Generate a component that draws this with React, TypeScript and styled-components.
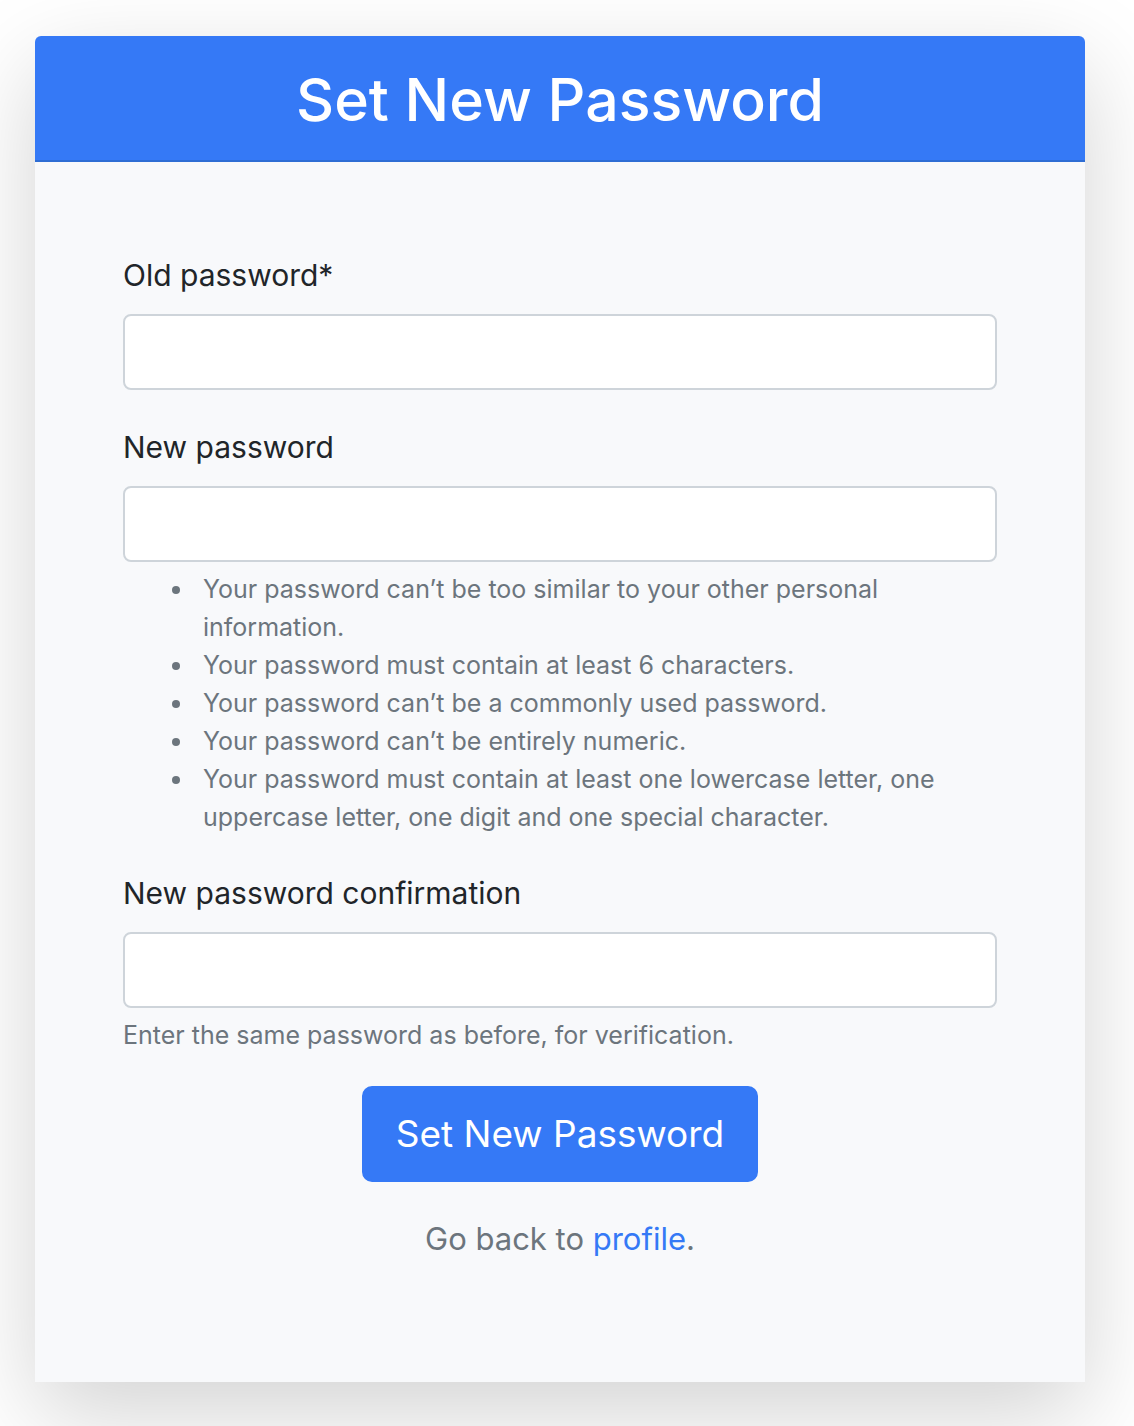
import React from "react";
import styled, { createGlobalStyle } from "styled-components";

const GlobalStyle = createGlobalStyle`
  *, *::before, *::after { box-sizing: border-box; }
  body {
    margin: 0;
    background: #fff;
    color: #212529;
    font-family: Inter, "Liberation Sans", sans-serif;
    font-size: 30px;
    line-height: 50px;
  }
`;

const Page = styled.main`
  padding: 36px 49px 44px 35px;
  overflow: hidden;
`;

const Card = styled.section`
  background: #f8f9fb;
  border-radius: 6px 6px 0 0;
  box-shadow: 0 32px 96px rgba(0, 0, 0, 0.175);
`;

const CardHeader = styled.header`
  padding: 24px 40px 20px;
  background: #3579f6;
  border-bottom: 2px solid #2e6dd4;
  border-radius: 6px 6px 0 0;
  text-align: center;
`;

const Title = styled.h1`
  margin: 0;
  color: #fff;
  font-size: 59px;
  font-weight: 500;
  line-height: 80px;
`;

const Form = styled.form`
  display: flex;
  flex-direction: column;
  padding: 88px;
`;

const Field = styled.div`
  display: flex;
  flex-direction: column;
  margin-bottom: 32px;
`;

const Label = styled.label`
  margin-bottom: 14px;
`;

const Input = styled.input`
  width: 100%;
  height: 76px;
  padding: 12px 24px;
  border: 2px solid #ced4da;
  border-radius: 8px;
  background: #fff;
  color: #495057;
  font: inherit;
`;

const Rules = styled.ul`
  margin: 8px 0 0;
  padding-left: 72px;
  color: #6c757d;
  font-size: 25px;
  line-height: 38px;
`;

const Rule = styled.li`
  padding-left: 8px;
`;

const Hint = styled.small`
  margin-top: 8px;
  color: #6c757d;
  font-size: 25px;
  line-height: 38px;
`;

const Submit = styled.button`
  align-self: center;
  padding: 16px 32px;
  border: 2px solid #3579f6;
  border-radius: 10px;
  background: #3579f6;
  color: #fff;
  font: inherit;
  font-size: 37px;
  line-height: 60px;
  cursor: pointer;
`;

const Footer = styled.p`
  margin: 32px 0 30px;
  color: #6c757d;
  font-size: 31px;
  text-align: center;
`;

const Link = styled.a`
  color: #3579f6;
  text-decoration: none;
`;

const rules = [
  "Your password can’t be too similar to your other personal information.",
  "Your password must contain at least 6 characters.",
  "Your password can’t be a commonly used password.",
  "Your password can’t be entirely numeric.",
  "Your password must contain at least one lowercase letter, one uppercase letter, one digit and one special character.",
];

export default function App() {
  return (
    <Page>
      <GlobalStyle />
      <Card>
        <CardHeader>
          <Title>Set New Password</Title>
        </CardHeader>
        <Form onSubmit={(event) => event.preventDefault()}>
          <Field>
            <Label htmlFor="old-password">Old password*</Label>
            <Input id="old-password" type="password" required />
          </Field>
          <Field>
            <Label htmlFor="new-password">New password</Label>
            <Input id="new-password" type="password" aria-describedby="password-rules" />
            <Rules id="password-rules">
              {rules.map((rule) => (
                <Rule key={rule}>{rule}</Rule>
              ))}
            </Rules>
          </Field>
          <Field>
            <Label htmlFor="confirm-password">New password confirmation</Label>
            <Input id="confirm-password" type="password" aria-describedby="confirm-hint" />
            <Hint id="confirm-hint">Enter the same password as before, for verification.</Hint>
          </Field>
          <Submit type="submit">Set New Password</Submit>
          <Footer>
            Go back to <Link href="#profile">profile</Link>.
          </Footer>
        </Form>
      </Card>
    </Page>
  );
}
